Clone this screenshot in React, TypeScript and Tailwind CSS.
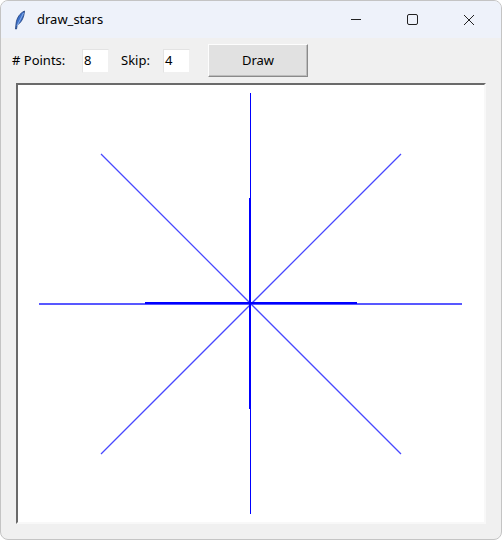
import React from "react";

// canvas inner origin is at (18, 84) in window coords
const CX = 250 - 18;
const CY = 301 - 84;

const Feather = () => (
  <svg width="12" height="20" viewBox="0 0 12 20">
    <path d="M10.5 1 C6 3 2.5 8 2 14 L1.5 19 L2.5 19 L3.2 15 C7 13 10 8 10.5 1 Z" fill="#3b6fc9" stroke="#1f3f7a" strokeWidth="0.8" />
    <path d="M9.5 3 L3 16" stroke="#9fc2f0" strokeWidth="0.8" />
  </svg>
);

const Star = () => {
  const vert = `M${CX + 0.5} ${CY - 209} L${CX + 0.5} ${CY + 212}`;
  const diag =
    `M${CX - 149} ${CY - 148} L${CX + 151} ${CY + 152} ` +
    `M${CX + 151} ${CY - 148} L${CX - 149} ${CY + 152}`;
  const horiz = `M${CX - 211} ${CY + 2} L${CX + 212} ${CY + 2}`;
  const thick =
    `M${CX} ${CY - 104} L${CX} ${CY + 107} ` +
    `M${CX - 105} ${CY + 1} L${CX + 107} ${CY + 1}`;
  return (
    <svg width="466" height="437" className="block">
      <path d={vert} stroke="#0000ff" strokeWidth="1" fill="none" />
      <path d={diag} stroke="#4848ff" strokeWidth="1.3" fill="none" />
      <path d={horiz} stroke="#2020ff" strokeWidth="1.6" fill="none" />
      <path d={thick} stroke="#0000ff" strokeWidth="2" fill="none" />
    </svg>
  );
};

export default function App() {
  return (
    <div className="w-[502px] h-[540px] bg-white">
      <div
        className="w-[502px] h-[540px] rounded-lg border border-[#c4c4c4] overflow-hidden bg-[#f0f0f0] flex flex-col"
        style={{ fontFamily: '"Noto Sans", "Open Sans", sans-serif' }}
      >
        {/* title bar */}
        <div className="h-[37px] shrink-0 bg-[#eef2fa] flex items-center text-[13px] text-black">
          <div className="ml-[13px] mt-[1px]"><Feather /></div>
          <span className="ml-[11px]">draw_stars</span>
          <div className="ml-auto flex items-center">
            <div className="w-[56px] flex justify-center">
              <div className="w-[10px] h-px bg-[#222]" />
            </div>
            <div className="w-[56px] flex justify-center">
              <div className="w-[11px] h-[11px] border border-[#222] rounded-[2px]" />
            </div>
            <div className="w-[58px] flex justify-center mr-[3px]">
              <svg width="12" height="12" viewBox="0 0 12 12">
                <path d="M1 1 L11 11 M11 1 L1 11" stroke="#222" strokeWidth="1" />
              </svg>
            </div>
          </div>
        </div>
        {/* toolbar */}
        <div className="h-[45px] shrink-0 flex items-center text-[13px] text-black">
          <span className="ml-[11px] w-[59px] whitespace-nowrap">#&nbsp;Points:</span>
          <div className="ml-[11px] w-[27px] h-[24px] bg-white border border-[#f0f0f0] border-t-[#e3e3e3] border-l-[#e3e3e3] flex items-center pl-[1px]">8</div>
          <span className="ml-[12px] w-[31px]">Skip:</span>
          <div className="ml-[11px] w-[27px] h-[24px] bg-white border border-[#f0f0f0] border-t-[#e3e3e3] border-l-[#e3e3e3] flex items-center pl-[1px]">4</div>
          <div className="ml-[18px] w-[100px] h-[33px] bg-[#e1e1e1] border border-[#fdfdfd] border-r-[#8a8a8a] border-b-[#8a8a8a] shadow-[inset_-1px_-1px_0_#bdbdbd] flex items-center justify-center">
            Draw
          </div>
        </div>
        {/* canvas */}
        <div className="ml-[15px] w-[470px] h-[441px] border-2 border-l-[#6a6a6a] border-t-[#6a6a6a] border-r-[#f8f8f8] border-b-[#f8f8f8] bg-white overflow-hidden">
          <Star />
        </div>
      </div>
    </div>
  );
}
